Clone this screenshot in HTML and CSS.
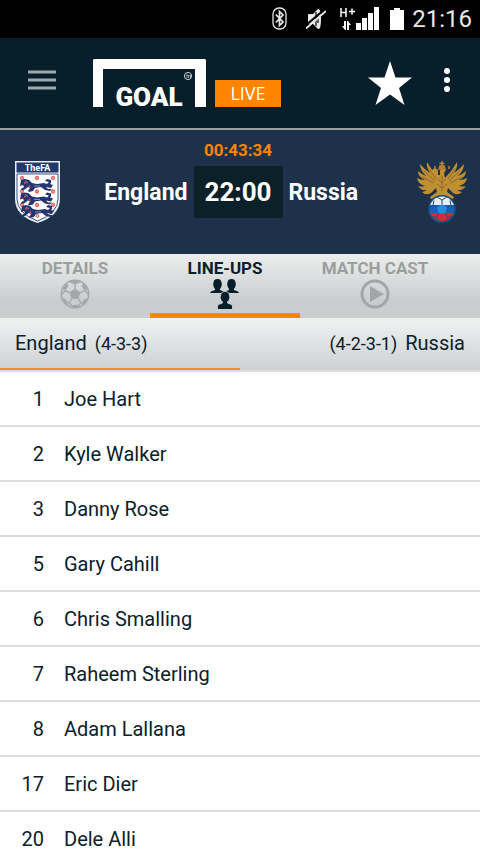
FILE: index.html
```html
<!DOCTYPE html>
<html lang="en">
<head>
<meta charset="utf-8">
<meta name="viewport" content="width=device-width, initial-scale=1">
<title>England v Russia</title>
<link rel="stylesheet" href="styles.css">
</head>
<body>
<div class="app">
  <div class="status">
    <svg width="16" height="24" viewBox="0 0 16 24" fill="none" stroke="#e8e8e8">
      <rect x="1" y="1" width="13" height="21" rx="6" stroke-width="1.3"/>
      <path d="M3.800 7.500 11 15 7.500 18.500V4.500L11 8 3.800 15.500" stroke-width="1.700"/>
    </svg>
    <svg class="mute" width="20" height="22" viewBox="0 0 20 22">
      <path d="M2 7q0-1 1-1h4l5-5q3-1 3 10t-3 10L7 16H3q-1 0-1-1z" fill="#e8e8e8"/>
      <path d="M10 4v14" stroke="#000" stroke-width="1.200"/>
      <path d="M12 8v7" stroke="#000" stroke-width="1.200"/>
      <path d="M-1 18 19 1" stroke="#000" stroke-width="2"/>
      <path d="M0 20.500 20 3" stroke="#e8e8e8" stroke-width="1.800"/>
    </svg>
    <svg class="signal" width="39" height="24" viewBox="0 0 39 24">
      <path d="M1 1v9M6 1v9M1 5.500h5M9 4.500h6M12 1.500v6" fill="none" stroke="#fff" stroke-width="1.500"/>
      <path d="M2 19h2v-5h2v9H5zM7 23v-9h1l3 4H9v5z" fill="#fff"/>
      <path d="M16 16h5v7h-5zM22 11h5v12h-5zM28 6h5v17h-5zM34 0h5v23h-5z" fill="#fff"/>
    </svg>
    <svg class="battery" width="14" height="23" viewBox="0 0 14 23"><path d="M4 0h6v2h4v20H0V2h4z" fill="#fff"/></svg>
    <time>21:16</time>
  </div>

  <header class="header">
    <button class="icon-button" aria-label="Menu">
      <svg width="28" height="21" viewBox="0 0 28 21"><path d="M0 2h28M0 10h28M0 18h28" stroke="#9fa9ae" stroke-width="3"/></svg>
    </button>
    <a class="brand" href="#">
      <svg class="logo" width="113" height="48" viewBox="0 0 113 48">
        <path d="M1 0h111l1 1v47h-11V10H10v38H0V1z" fill="#fff"/>
        <text class="goal" x="56" y="47" text-anchor="middle">GOAL</text>
        <circle cx="95" cy="17" r="3.600" fill="none" stroke="#cdd3d6"/>
        <path d="M93 16h2M94 16v3M95.500 19v-3l1 1 1-1v3" fill="none" stroke="#cdd3d6" stroke-width=".7"/>
      </svg>
      <span class="live">LIVE</span>
    </a>
    <button class="icon-button star" aria-label="Favourite">
      <svg width="44" height="44" viewBox="0 0 44 44"><path d="M22 0 27.500 16.500H44L31 27 36.500 44 22 33.500 7.500 44 13 27 0 16.500h16.500z" fill="#fff"/></svg>
    </button>
    <button class="icon-button more" aria-label="More options">
      <svg width="6" height="24" viewBox="0 0 6 24" fill="#fff"><circle cx="3" cy="3" r="3"/><circle cx="3" cy="12" r="3"/><circle cx="3" cy="21" r="3"/></svg>
    </button>
  </header>

  <section class="match">
    <svg width="46" height="62" viewBox="0 0 46 62" role="img" aria-label="England crest">
      <defs>
        <g id="lion">
          <path d="M0 1 4 0l4 1 3 3 5 1 7-1 3 1 2-2-4-1 2-2 4 1v3l-1 1 3 1-2 3-5-1 2 2 4 0-2 2-5-1-4-3-6 1-2 3-4 1-1-1 2-3-2-1-4 3-3 0v-1l3-2-1-2-3 1z" fill="#24356f"/>
          <path d="M4 2 7 4M13 7l6 0" stroke="#9da8c9" stroke-width=".8"/>
          <path d="M8 6l1 3M3 4h2" stroke="#d84b50" stroke-width="1.300"/>
        </g>
        <g id="roses" fill="#f6c2be" stroke="#e4645f" stroke-width="1.300"><circle cx="7" cy="0" r="1.500"/><circle cx="22" cy="0" r="1.500"/><circle cx="38" cy="0" r="1.500"/></g>
      </defs>
      <path d="M0 0h45v38q0 17-22.500 24Q0 55 0 38z" fill="#e9edf5"/>
      <path d="M1.500 1.500h42v10h-42z" fill="#22386f"/>
      <path d="M2 13h41v25q0 14-20.500 22Q2 52 2 38z" fill="#fff" stroke="#42558a"/>
      <text class="crest-text" x="22.500" y="10" text-anchor="middle">TheFA</text>
      <use href="#roses" y="17"/><use href="#roses" y="30.500"/><use href="#roses" y="44"/>
      <circle cx="22.500" cy="55" r="1.500" fill="#f6c2be" stroke="#e4645f"/>
      <use href="#lion" x="6" y="18"/><use href="#lion" x="6" y="31.500"/><use href="#lion" x="7" y="44"/>
    </svg>
    <div class="score">
      <span class="countdown">00:43:34</span>
      <div class="fixture">
        <span class="home">England</span>
        <time class="kickoff">22:00</time>
        <span class="away">Russia</span>
      </div>
    </div>
    <svg width="54" height="62" viewBox="0 0 54 62" role="img" aria-label="Russia crest">
      <path d="M24 17Q17 10 12 1q-1 5 3 11Q9 8 5 3q0 6 6 12-5-2-8-5 0 6 7 9-5 0-8-2 1 6 8 8-5 1-7 0 3 5 9 4-3 2-5 2 4 4 9 1l5-5 1 4-7 5 1 2 6-2 2 3h6l2-3 6 2 1-2-7-5 1-4 5 5q5 3 9-1-2 0-5-2 6 1 9-4-2 1-7 0 7-2 8-8-3 2-8 2 7-3 7-9-3 3-8 5 6-6 6-12-4 5-10 9 4-6 3-11-5 9-12 16l-1-5 2-3-3-2-3 2v5h-2v-5l-3-2-3 2 2 3z" fill="#c08f31"/>
      <path d="M27 0v7M24.500 2.500h5M20 5v3M34 5v3M25 5h4l1 3h-6z" fill="#b5852d" stroke="#b5852d" stroke-width="1.500"/>
      <path d="m14 8 7 10M9 10l11 10M7 16l12 6M40 8l-7 10M45 10 34 20M47 16l-12 6M27 15v15M23 18l4 4 4-4M22 23l5 4 5-4" fill="none" stroke="#806133" stroke-width=".8"/>
      <circle cx="27" cy="48" r="14" fill="#164d7a"/>
      <clipPath id="ball"><circle cx="27" cy="48" r="12.500"/></clipPath>
      <g clip-path="url(#ball)">
        <path d="M13 35h28v9H13z" fill="#e9edf3"/><path d="M13 44h28v8H13z" fill="#1763b3"/><path d="M13 52h28v10H13z" fill="#d42a3c"/>
        <path d="m27 43 5 3.500-2 6h-6l-2-6z" fill="#2e8cd5"/>
        <path d="m27 43v-4l-5-3M27 39l5-3M32 46.500l4-2 4 2M36 44.500l-1-5M30 52.500l3 4 5-1M33 56.500l-3 4M24 52.500l-3 4-5-1M21 56.500l3 4M22 46.500l-4-2-4 2M18 44.500l1-5" fill="none" stroke="#175184"/>
      </g>
    </svg>
  </section>

  <nav class="tabs">
    <a class="tab" href="#">DETAILS
      <svg width="30" height="30" viewBox="0 0 30 30" fill="none" stroke="#a2a7a8">
        <circle cx="15" cy="15" r="13.700" stroke-width="1.500"/>
        <path d="m15 10 5 3.700-2 5.600h-6l-2-5.600z" fill="#a2a7a8"/>
        <path d="M15 10V5M20 13.700l5-2M18 19.300l3 4.700M12 19.300 9 24M10 13.700l-5-2M15 5l5-2M15 5l-5-2M25 11.700 22.500 6M25 11.700l3.500 4M21 24l5-2M21 24l-4 4M9 24l-5-2M9 24l4 4M5 11.700 7.500 6M5 11.700l-3.500 4" stroke-width="1.300"/>
        <path d="m10.500 1.800 4.500 3.700 4.500-3.700zM23 4.500l-1 3.500 4 3 2-1zM28 19l-4 1.500-2 5 1 .5zM7 4.500 8 8l-4 3-2-1zM2 19l4 1.500 2 5-1 .5zM11.500 28l1.500-2h4l1.500 2z" fill="#a2a7a8" stroke="none"/>
      </svg>
    </a>
    <a class="tab active" href="#" aria-current="page">LINE-UPS
      <svg width="30" height="30" viewBox="0 0 30 30" fill="#071f2a">
        <defs><path id="person" d="M3.500 4Q3.500 0 7.500 0t4 4l.5 1-.8 3-1.200 2v1l4 1.500 1 1.500H0l1-1.500L5 11v-1L3.800 8 3 5z"/></defs>
        <use href="#person" x="0"/><use href="#person" x="14"/>
        <path d="M10.500 17q0-4.500 4.500-4.500t4.500 4.500l.5 1-.8 3-1.700 2v1l4 1.500 1 1.500v3.500H7.500V27l1-1.500 4-1.500v-1l-1.700-2-.8-3z" stroke="#d5d8d9" stroke-width=".8"/>
      </svg>
    </a>
    <a class="tab" href="#">MATCH CAST
      <svg width="30" height="30" viewBox="0 0 30 30"><circle cx="15" cy="15" r="13" fill="none" stroke="#a1a6a7" stroke-width="3"/><path d="m10 7 14 8-14 8z" fill="#a1a6a7"/></svg>
    </a>
  </nav>

  <div class="teams">
    <button class="team selected"><span>England</span><span class="formation">(4-3-3)</span></button>
    <button class="team right"><span class="formation">(4-2-3-1)</span><span>Russia</span></button>
  </div>

  <ul class="players">
    <li><span class="number">1</span>Joe Hart</li>
    <li><span class="number">2</span>Kyle Walker</li>
    <li><span class="number">3</span>Danny Rose</li>
    <li><span class="number">5</span>Gary Cahill</li>
    <li><span class="number">6</span>Chris Smalling</li>
    <li><span class="number">7</span>Raheem Sterling</li>
    <li><span class="number">8</span>Adam Lallana</li>
    <li><span class="number">17</span>Eric Dier</li>
    <li><span class="number">20</span>Dele Alli</li>
  </ul>
</div>
</body>
</html>
```
FILE: styles.css
```css
* { box-sizing: border-box; }

body {
  margin: 0;
  background: #fff;
  color: #0b202b;
  font-family: Roboto, "Liberation Sans", sans-serif;
  font-size: 20px;
}

svg { display: block; flex: none; }
a { color: inherit; text-decoration: none; }
button { border: 0; padding: 0; background: none; color: inherit; font: inherit; }

.app { display: flex; flex-direction: column; height: 100vh; }
.app > * { flex: none; }

.status {
  display: flex;
  justify-content: flex-end;
  align-items: center;
  height: 38px;
  padding-right: 8px;
  background: #000;
  color: #e8e8e8;
  font-size: 24px;
}
.mute { margin-left: 18px; }
.signal { margin-left: 14px; }
.battery { margin: 0 8px 0 11px; }

.header {
  display: flex;
  align-items: center;
  height: 92px;
  padding: 0 30px 6px 28px;
  border-bottom: 2px solid #9a9fa3;
  background: #071f2a;
}
.brand { display: flex; align-items: flex-end; gap: 9px; margin: 6px 0 0 37px; }
.logo { overflow: visible; }
.goal { font-size: 26px; font-weight: 900; fill: #fff; }
.live {
  width: 66px;
  background: #ff8400;
  color: #fff;
  font: 400 18px/27px "Open Sans", sans-serif;
  text-align: center;
}
.star { margin: 6px 0 0 auto; }
.more { margin-left: 32px; }

.match {
  display: flex;
  justify-content: space-between;
  align-items: center;
  height: 124px;
  padding: 0 11px 0 15px;
  background: #1e314a;
  color: #fff;
}
.score { flex: 1; text-align: center; font-weight: 700; }
.countdown { display: block; color: #ff8400; font-size: 17px; line-height: 24px; }
.fixture {
  display: grid;
  grid-template-columns: 1fr 89px 1fr;
  align-items: center;
  gap: 6px;
  margin: 4px 0 28px;
  font-size: 23px;
}
.home { text-align: right; }
.away { text-align: left; }
.kickoff { background: #0c202a; font-size: 26px; line-height: 52px; }

.tabs {
  display: flex;
  height: 64px;
  background: linear-gradient(#eceeee, #c9cccd 75%, #cccdce);
}
.tab {
  display: flex;
  flex-direction: column;
  align-items: center;
  width: 150px;
  padding-top: 4px;
  border-bottom: 5px solid transparent;
  color: #9b9d9e;
  font-size: 17px;
  font-weight: 700;
  line-height: 21px;
}
.active { border-color: #ff8400; color: #0b202b; }

.teams {
  display: grid;
  grid-template-columns: 1fr 1fr;
  height: 54px;
  border-bottom: 2px solid #dcdddd;
  background: linear-gradient(#f0f2f2, #cdd1d2);
}
.team {
  display: flex;
  align-items: center;
  gap: 8px;
  padding: 0 15px;
  border-bottom: 2px solid transparent;
}
.selected { border-color: #f58a1c; }
.right { justify-content: flex-end; }
.formation { font-size: 18px; }

.app > .players {
  flex: 1;
  min-height: 0;
  margin: 0;
  padding: 0;
  overflow-y: auto;
  scrollbar-width: none;
  list-style: none;
}
.players li {
  display: flex;
  align-items: center;
  gap: 20px;
  height: 55px;
  border-bottom: 2px solid #dcdcdc;
}
.number { width: 44px; text-align: right; }

.crest-text { font-size: 9px; font-weight: 700; fill: #fff; }
```
